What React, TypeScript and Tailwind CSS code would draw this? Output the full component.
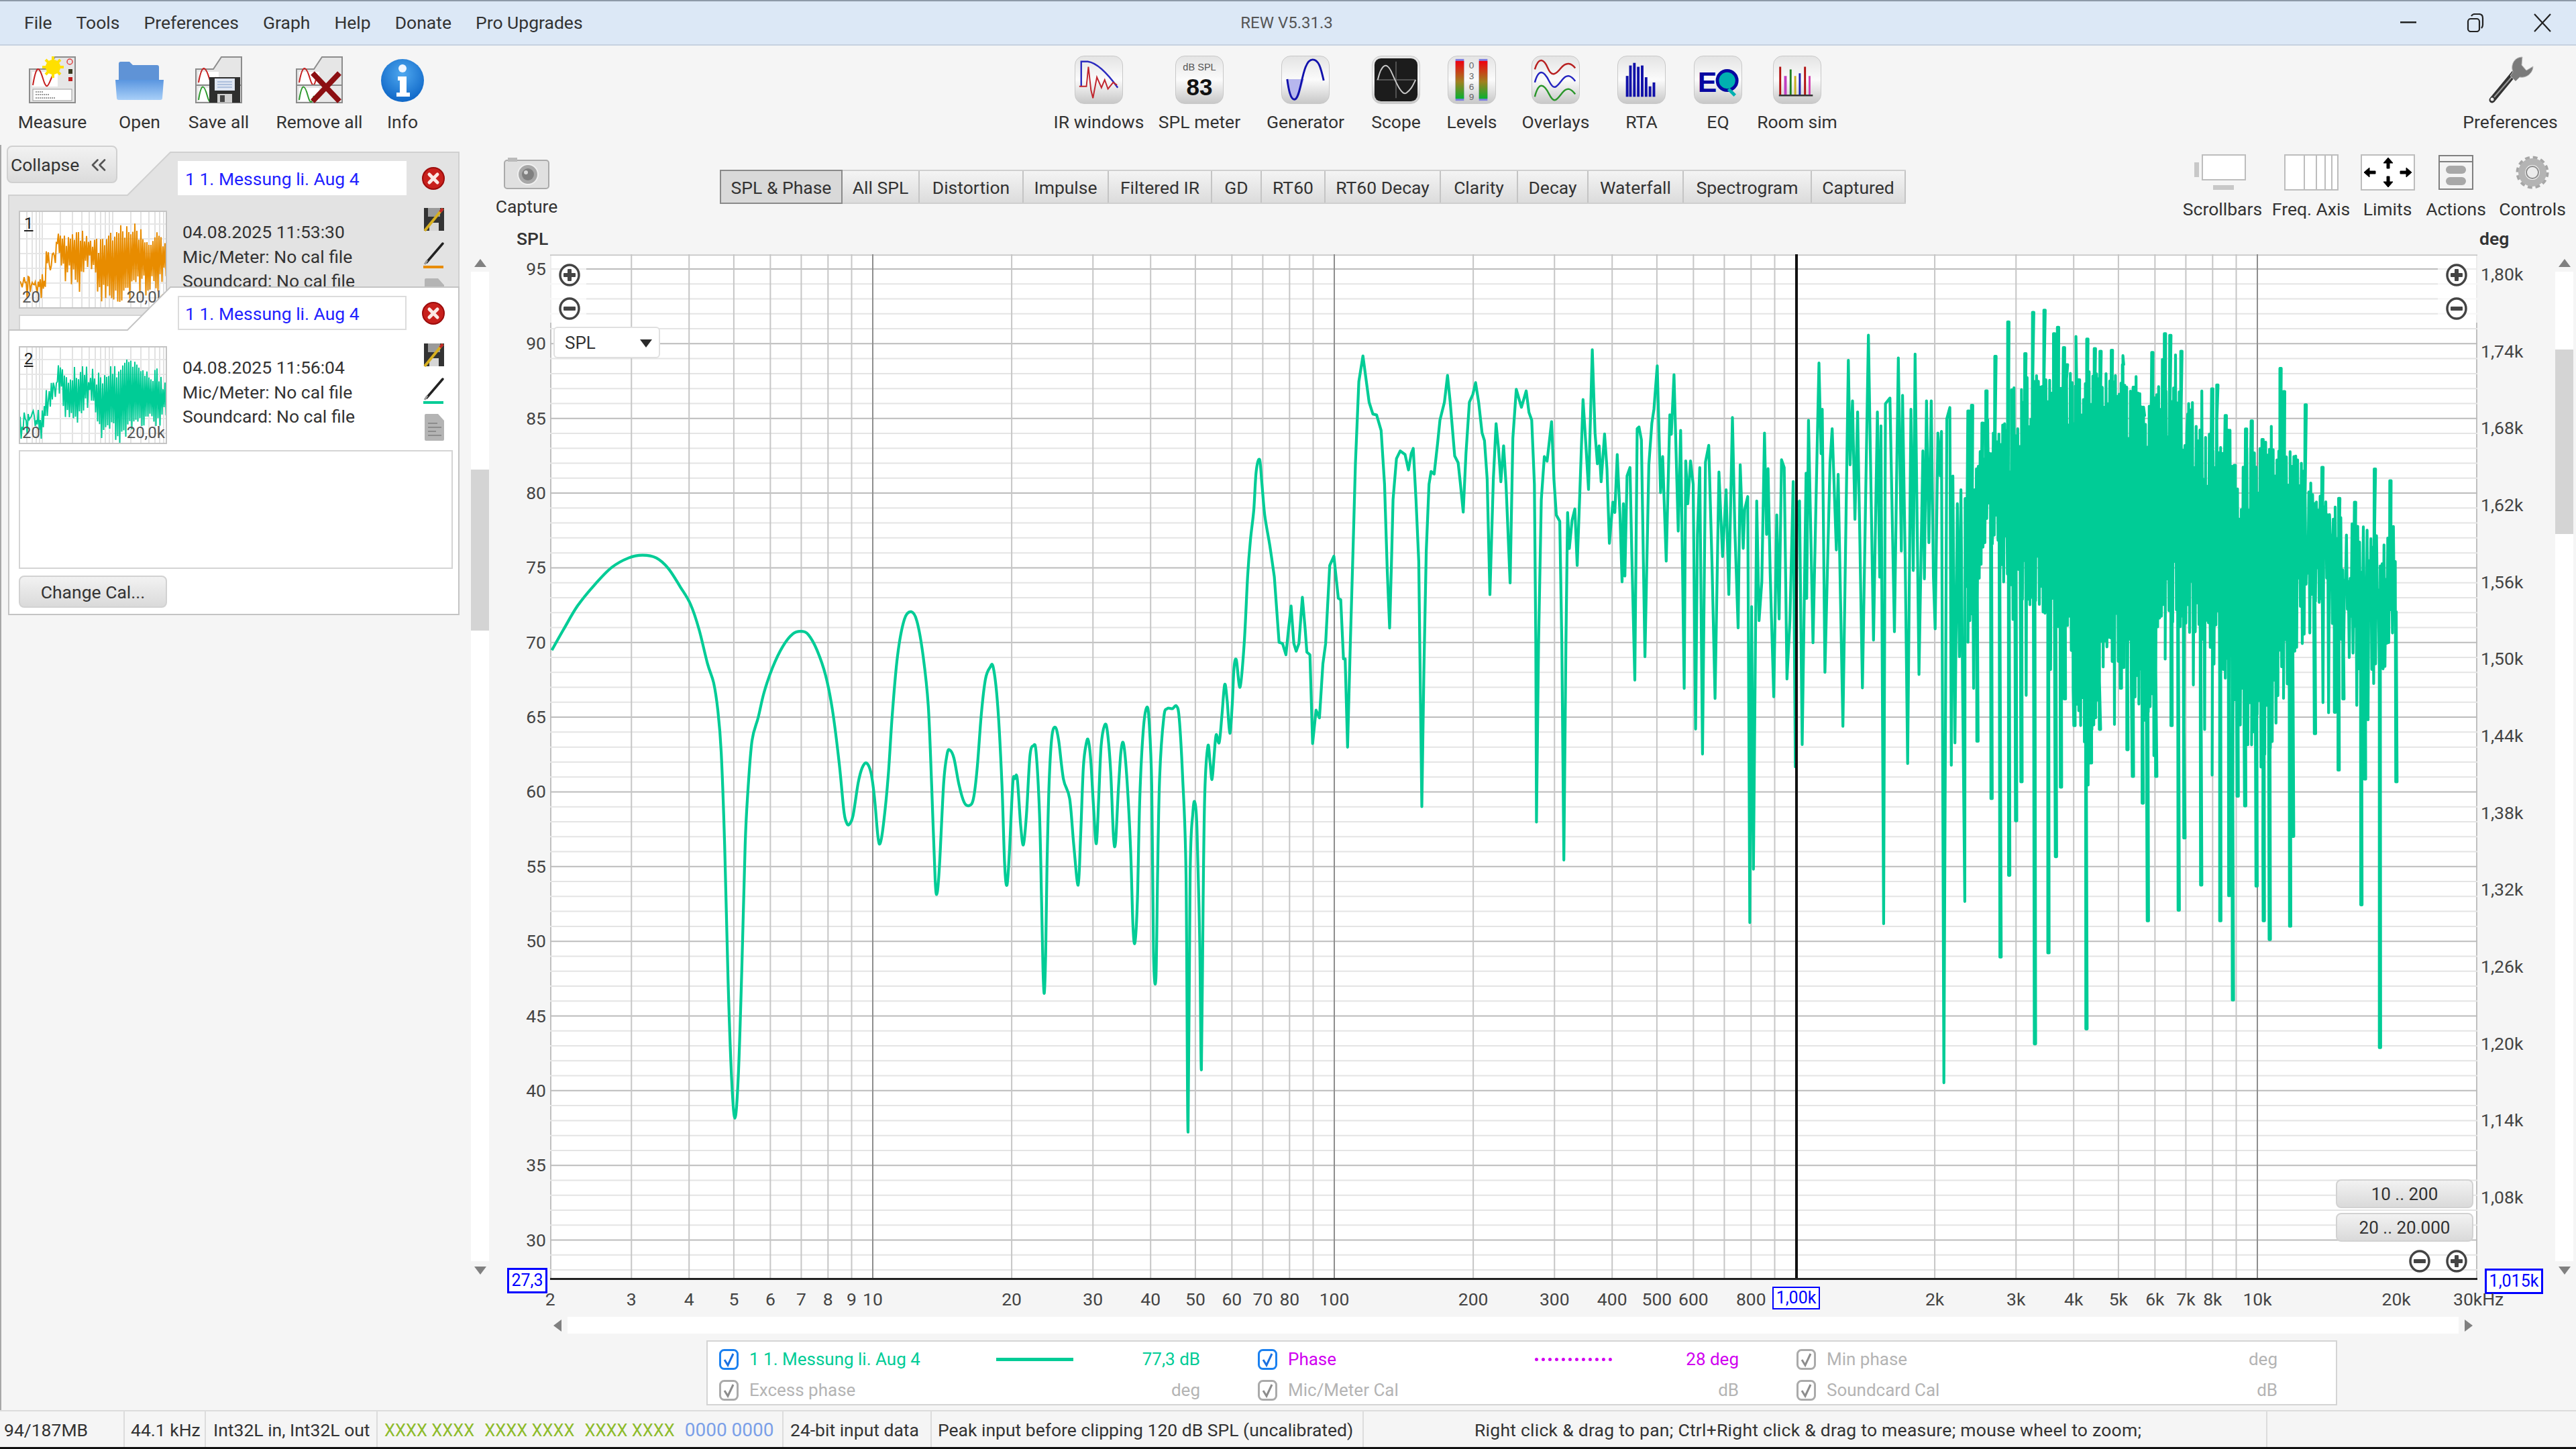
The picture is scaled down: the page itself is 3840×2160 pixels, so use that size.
import { ChevronsLeft } from "lucide-react";
import type { ReactNode } from "react";

const PLOT_W = 2873;
const PLOT_H = 1529;
const gx = (f: number) => 1169 + 688 * Math.log10(f / 100);
const gy = (db: number) => 22 + (95 - db) * 22.27;

const seeded = (seed: number) => () => {
  seed = (seed * 1664525 + 1013904223) >>> 0;
  return seed / 4294967296;
};

const lerp = (table: number[][], x: number) => {
  for (let i = 1; i < table.length; i++) {
    if (x <= table[i][0]) {
      const [x0, y0] = table[i - 1];
      const [x1, y1] = table[i];
      return y0 + ((y1 - y0) * (x - x0)) / (x1 - x0);
    }
  }
  return table[table.length - 1][1];
};

// traced curve, in crop coordinates of each part of the plot
const low = [[5,295],[40,240],[80,180],[130,125],[180,80],[230,55],[270,48],[310,55],[345,82],[380,130],[410,175],[435,240],[460,330],[478,380],[490,450],[500,560],[510,800],[520,1150],[530,1400],[540,1510],[550,1400],[560,1130],[570,800],[578,660],[590,530],[608,470],[625,405],[650,340],[680,285],[710,252],[735,246],[755,255],[780,295],[805,360],[825,450],[845,590],[858,710],[865,740],[873,748],[885,725],[900,640],[912,600],[925,588],[938,615],[948,680],[958,780],[965,795],[975,740],[988,620],[1000,460],[1015,310],[1035,215],[1055,195],[1072,220],[1090,310],[1105,440],[1115,650],[1125,890],[1131,925],[1138,850],[1150,640],[1160,565],[1168,554],[1180,575],[1195,645],[1210,690],[1225,698],[1237,680],[1248,600],[1260,460],[1272,370],[1285,340],[1295,340],[1308,440],[1320,640],[1328,850],[1335,905],[1342,820],[1352,640],[1358,628],[1365,628],[1375,750],[1383,800],[1392,720],[1402,570],[1412,543],[1420,560],[1430,720],[1436,950],[1440,1120],[1444,1185],[1448,1080],[1452,850],[1458,640],[1466,520],[1476,495],[1486,530],[1500,630],[1518,680],[1530,800],[1543,905],[1550,780],[1558,600],[1567,535]];
const mid = [[5,790],[12,830],[20,920],[28,990],[35,900],[42,800],[52,760],[60,770],[70,850],[78,975],[84,988],[92,890],[100,810],[108,797],[118,870],[128,1000],[135,1150],[141,1182],[148,1100],[155,900],[165,770],[175,725],[182,750],[190,880],[195,1200],[202,1252],[207,1050],[213,860],[225,745],[235,727],[250,727],[262,722],[270,745],[280,860],[290,1050],[296,1552],[302,1050],[310,930],[316,910],[322,960],[330,1180],[335,1430],[340,1100],[345,890],[354,800],[360,830],[366,865],[372,820],[378,778],[387,793],[395,740],[403,680],[410,710],[418,775],[425,720],[430,650],[437,632],[448,685],[460,600],[470,470],[478,400],[488,340],[495,265],[505,242],[512,290],[520,350],[535,410],[548,470],[562,598],[572,600],[582,622],[590,570],[597,527],[605,600],[612,615],[620,600],[630,510],[638,570],[643,617],[652,622],[660,795],[670,730],[680,745],[690,640],[698,600],[710,448],[722,430],[730,480],[735,512],[742,515],[750,630],[755,630],[762,802],[770,600],[778,420],[785,250],[795,90],[807,40],[815,80],[825,130],[836,153],[847,155],[860,185],[870,290],[878,460],[885,570],[890,450],[895,320],[905,240],[916,225],[930,232],[940,262],[948,230],[954,220],[962,320],[970,440],[975,700],[979,918],[985,650],[992,420],[1000,290],[1006,265],[1015,270],[1025,210],[1032,165],[1045,130],[1054,78],[1062,130],[1075,235],[1085,248],[1092,290],[1100,344],[1108,230],[1118,130],[1128,115],[1136,92],[1145,130],[1155,190],[1162,205],[1170,280],[1178,505],[1188,280],[1196,172],[1203,220],[1210,285],[1218,215],[1225,290],[1237,482],[1245,200],[1255,105],[1270,140],[1284,108],[1292,150],[1300,165],[1308,290],[1312,600],[1314,948],[1320,600],[1328,320],[1337,236],[1345,245],[1358,168],[1365,280],[1372,350],[1382,362],[1388,600],[1394,1022],[1400,600],[1405,345],[1410,415],[1418,360],[1426,338],[1433,448],[1441,300],[1450,125],[1458,210],[1466,300],[1477,28],[1485,190],[1492,250],[1497,215],[1503,285],[1513,192],[1520,260],[1527,405],[1537,325],[1543,345],[1550,232],[1558,350],[1564,480],[1568,330]];
const high = [[0,375],[5,505],[12,325],[22,310],[28,465],[38,692],[46,240],[52,237],[60,260],[72,650],[85,305],[95,230],[102,205],[113,127],[124,355],[131,290],[143,478],[155,215],[160,250],[169,143],[183,424],[191,243],[203,707],[208,298],[215,375],[224,298],[233,340],[241,780],[247,430],[255,310],[264,825],[274,300],[285,270],[296,485],[306,725],[319,318],[331,470],[343,350],[352,538],[364,220],[372,420],[383,598],[390,305],[400,455],[405,385],[415,362],[422,1128],[428,560],[434,1032],[445,370],[453,585],[462,515],[471,248],[478,430],[483,312],[490,500],[502,722],[512,395],[520,582],[528,296],[537,310],[546,690],[556,585],[567,335],[574,848],[580,375],[588,370],[597,808],[610,320],[612,545],[618,225],[633,625],[653,122],[660,285],[664,205],[673,678],[690,300],[697,240],[711,458],[717,322],[733,775],[751,117],[757,305],[765,190],[773,403],[782,210],[798,706],[818,72],[835,620],[848,210],[856,507],[860,235],[869,1130],[875,195],[890,185],[905,605],[918,113],[928,460],[932,180],[941,480],[949,842],[960,205],[968,495],[974,106],[987,682],[1000,280],[1005,510],[1012,190],[1020,445],[1028,190],[1035,505],[1041,600],[1050,248],[1058,325],[1062,245],[1070,1416],[1080,222],[1090,202],[1095,845],[1100,325],[1107,805],[1115,375],[1122,650],[1127,350],[1133,725],[1140,1090]];
const denseSpikes11 = [[1150,208],[1162,198],[1180,802],[1197,230],[1210,172],[1227,905],[1240,110],[1257,1190],[1283,48],[1286,1043],[1296,170],[1309,945],[1327,875],[1340,105]];
const denseSpikes12 = [[22,32],[28,1400],[60,28],[73,1230],[92,72],[98,1050],[105,60],[115,920],[125,98],[128,755],[135,130],[160,805],[165,170],[175,158],[200,1372],[203,82],[215,875],[228,100],[245,812],[247,105],[285,103],[288,685],[315,735],[322,130],[337,850],[355,900],[358,172],[388,950],[392,225],[405,1170],[420,107],[433,900],[462,72],[480,75],[484,805],[508,1150],[517,105],[527,1015],[540,222],[578,290],[583,1103],[600,608],[620,175],[637,168],[647,1170],[665,225],[677,1123],[689,1318],[695,318],[705,937],[730,955],[733,250],[752,235],[755,650],[768,1105],[788,270],[792,1170],[812,1205],[847,430],[848,137],[860,180],[880,1180],[890,1012],[932,205],[963,820],[988,322],[1030,780],[1042,888],[1044,380],[1058,755],[1097,387],[1118,1140],[1130,905],[1163,325],[1180,1407],[1215,347],[1235,910]];

const from9 = ([x, y]: number[]) => [x / 1.96, 800 - 379 + y / 1.742];
const from10 = ([x, y]: number[]) => [800 + x / 1.96, 500 - 379 + y / 1.3067];
const from11 = ([x, y]: number[]) => [1600 + x / 2.24, 440 - 379 + y / 1.206];
const from12 = ([x, y]: number[]) => [2200 + x / 2.24, 440 - 379 + y / 1.2544];

const buildCurve = () => {
  const smooth = [...low.map(from9), ...mid.filter((p) => p[0] < 560).map(from10)];
  let d = `M${smooth[0][0]} ${smooth[0][1]}`;
  for (let i = 0; i < smooth.length - 1; i++) {
    const p0 = smooth[Math.max(i - 1, 0)];
    const p1 = smooth[i];
    const p2 = smooth[i + 1];
    const p3 = smooth[Math.min(i + 2, smooth.length - 1)];
    const c1 = [p1[0] + (p2[0] - p0[0]) / 6, p1[1] + (p2[1] - p0[1]) / 6];
    const c2 = [p2[0] - (p3[0] - p1[0]) / 6, p2[1] - (p3[1] - p1[1]) / 6];
    d += `C${c1[0].toFixed(1)} ${c1[1].toFixed(1)} ${c2[0].toFixed(1)} ${c2[1].toFixed(1)} ${p2[0].toFixed(1)} ${p2[1].toFixed(1)}`;
  }
  const rest = [...mid.filter((p) => p[0] >= 560).map(from10), ...high.map(from11)];
  rest.forEach((p) => (d += `L${p[0].toFixed(1)} ${p[1].toFixed(1)}`));

  // dense part above 3 kHz: body between two envelopes, with the traced spikes in it
  const upper = [[1140,360],[1200,260],[1300,220]].map(from11).concat([[0,150],[100,150],[200,140],[300,150],[400,210],[500,150],[600,240],[700,330],[800,260],[900,300],[1000,400],[1100,430],[1200,450],[1235,450]].map(from12));
  const lower = [[1140,650],[1200,500],[1300,550],[1400,570],[1500,600]].map(from11).concat([[100,590],[200,850],[300,680],[400,800],[500,620],[600,650],[700,800],[800,900],[900,670],[1000,590],[1100,700],[1200,700],[1235,600]].map(from12));
  const spikes = [...denseSpikes11.map(from11), ...denseSpikes12.map(from12)].sort((a, b) => a[0] - b[0]);
  const rnd = seeded(41);
  let s = 0;
  let top = true;
  for (let x = from11([1141, 0])[0]; x < 2752; x += 1.4) {
    while (s < spikes.length && spikes[s][0] <= x) {
      const [sx, sy] = spikes[s];
      d += `L${sx.toFixed(1)} ${sy.toFixed(1)}L${(sx + 2).toFixed(1)} ${sy.toFixed(1)}`;
      s++;
    }
    const u = lerp(upper, x);
    const l = lerp(lower, x);
    const r = rnd();
    const y = top
      ? u + r * r * 95 - (rnd() < 0.2 ? rnd() * 60 : 0)
      : l - r * r * 120 + (rnd() < 0.12 ? rnd() * 180 : 0);
    d += `L${x.toFixed(1)} ${y.toFixed(1)}`;
    top = !top;
  }
  return d;
};

const curvePath = buildCurve();

const thumbUpper = [[0,97],[35,90],[40,45],[45,75],[55,25],[70,28],[95,24],[118,37],[137,20],[165,14],[185,20],[205,30],[221,47]];
const thumbLower = [[0,137],[20,125],[33,146],[45,85],[57,75],[67,108],[88,120],[103,90],[118,135],[137,135],[150,146],[165,130],[190,125],[221,112]];

const thumbPoints = (seed: number) => {
  const rnd = seeded(seed);
  const pts: string[] = [];
  let top = true;
  for (let x = 0; x <= 221; x += 1.5) {
    const u = lerp(thumbUpper, x);
    const l = lerp(thumbLower, x);
    const y = top ? u + rnd() * 26 : l - rnd() * 32;
    pts.push(`${x},${y.toFixed(1)}`);
    top = !top;
  }
  return pts.join(" ");
};

const Tile = ({ children }: { children: ReactNode }) => (
  <div className="h-[72px] w-[72px] rounded-[14px] border border-[#c8c8c8] bg-linear-to-b from-[#e4e4e4] via-[#fbfbfb] to-[#c8c8c8] overflow-hidden">
    <svg width="70" height="70" viewBox="0 0 72 72">{children}</svg>
  </div>
);

const Panel = ({ y = 0 }: { y?: number }) => (
  <path d={`M2 ${y + 20}H28L40 ${y + 2}H70V${y + 70}H2Z`} fill="#e6e6e6" stroke="#8c8c8c" strokeWidth="2" />
);

const MeasureIcon = () => (
  <svg width="72" height="72" viewBox="0 0 72 72">
    <Panel />
    <rect x="6" y="24" width="38" height="22" fill="#fff" />
    <path d="M7 44C12 14 16 14 22 34S30 44 36 30" fill="none" stroke="#c62020" strokeWidth="2" />
    <circle cx="62" cy="9" r="4" fill="none" stroke="#e04040" strokeWidth="1.5" />
    <rect x="60" y="20" width="6" height="7" fill="#3a3a20" />
    <rect x="60" y="32" width="6" height="6" fill="#c02020" />
    <rect x="7" y="50" width="58" height="17" fill="#fff" stroke="#999" />
    <path d="M11 54h12M11 58h20M11 63h30" stroke="#777" strokeWidth="1.5" strokeDasharray="2 1" />
    <g stroke="#ffe000" strokeWidth="4">
      <path d="M37 1v32M21 17h32M26 6l22 22M48 6L26 28" />
    </g>
    <circle cx="37" cy="17" r="11" fill="#ffe000" />
  </svg>
);

const OpenIcon = () => (
  <svg width="72" height="72" viewBox="0 0 72 72">
    <defs>
      <linearGradient id="folderFront" x1="0" y1="0" x2="0" y2="1">
        <stop offset="0" stopColor="#5a96e0" />
        <stop offset="1" stopColor="#a8cff8" />
      </linearGradient>
    </defs>
    <path d="M5 12a3 3 0 0 1 3-3h13l5 5h36a3 3 0 0 1 3 3v20H5Z" fill="#5f93d6" />
    <path d="M0 36h72l-2 27a3 3 0 0 1-3 3H5a3 3 0 0 1-3-3Z" fill="url(#folderFront)" />
  </svg>
);

const FloppyWave = () => (
  <>
    <Panel />
    <rect x="6" y="24" width="30" height="18" fill="#fff" />
    <path d="M6 40C11 12 16 14 22 34S30 38 32 32" fill="none" stroke="#c62020" strokeWidth="2" />
    <rect x="2" y="44" width="68" height="26" fill="#e8e8e8" stroke="#8c8c8c" strokeWidth="2" />
    <rect x="6" y="48" width="30" height="20" fill="#fff" />
    <path d="M6 66C10 40 14 42 19 60S26 64 28 60" fill="none" stroke="#2f9a2f" strokeWidth="2" />
  </>
);

const SaveAllIcon = () => (
  <svg width="72" height="72" viewBox="0 0 72 72">
    <FloppyWave />
    <path d="M22 32h46v38H22Z" fill="#2e2e2e" />
    <rect x="30" y="34" width="30" height="18" fill="#dfe6f2" />
    <path d="M34 39h22M34 43h22M34 47h22" stroke="#9fb4d6" strokeWidth="1.5" />
    <rect x="34" y="57" width="22" height="13" fill="#d0d0d0" />
    <rect x="38" y="59" width="7" height="10" fill="#444" />
  </svg>
);

const RemoveAllIcon = () => (
  <svg width="72" height="72" viewBox="0 0 72 72">
    <FloppyWave />
    <path d="M26 26l40 42M66 26L26 68" stroke="#8c0f12" strokeWidth="8" />
  </svg>
);

const InfoIcon = () => (
  <svg width="72" height="72" viewBox="0 0 72 72">
    <defs>
      <radialGradient id="infoBall" cx="0.5" cy="0.35" r="0.7">
        <stop offset="0" stopColor="#4fa8ef" />
        <stop offset="1" stopColor="#0a62c4" />
      </radialGradient>
    </defs>
    <ellipse cx="36" cy="37" rx="32" ry="32" fill="url(#infoBall)" />
    <circle cx="36" cy="19" r="6" fill="#f0f6ff" />
    <path d="M29 31h13v24h5v6H27v-6h5V37h-3Z" fill="#fff" />
  </svg>
);

const IrIcon = () => (
  <Tile>
    <path d="M9 46V8h10c15 2 33 22 46 40" fill="none" stroke="#2b2bbf" strokeWidth="2.5" />
    <path d="M6 46h11l3-30 4 36 3 12 6-32 7 16 5-12 5 14 8-10 6 4" fill="none" stroke="#c0242c" strokeWidth="2" />
  </Tile>
);

const SplIcon = () => (
  <Tile>
    <text x="36" y="22" textAnchor="middle" fontSize="15" fontFamily="Liberation Sans" fill="#555">dB SPL</text>
    <text x="36" y="60" textAnchor="middle" fontSize="36" fontWeight="700" fontFamily="Liberation Sans" fill="#111">83</text>
  </Tile>
);

const GeneratorIcon = () => (
  <Tile>
    <path d="M8 35H34C28 52 26 66 19 66 13 66 10 50 8 35Z" fill="#b7b7ee" />
    <path d="M8 35C10 50 13 66 19 66 30 66 30 5 47 5 57 5 60 20 64 37" fill="none" stroke="#1212ac" strokeWidth="3" />
  </Tile>
);

const ScopeIcon = () => (
  <Tile>
    <rect x="3" y="3" width="66" height="66" rx="10" fill="#1c1c1c" />
    <path d="M36 8v56M6 36h60" stroke="#666" strokeWidth="1.5" />
    <path d="M8 36C14 10 22 10 28 22S44 62 52 56 62 44 66 36" fill="none" stroke="#c8c8c8" strokeWidth="2" />
  </Tile>
);

const LevelsIcon = () => (
  <Tile>
    <defs>
      <linearGradient id="levelBar" x1="0" y1="0" x2="0" y2="1">
        <stop offset="0" stopColor="#f00010" />
        <stop offset="0.55" stopColor="#a08020" />
        <stop offset="1" stopColor="#08b030" />
      </linearGradient>
    </defs>
    <rect x="11" y="4" width="13" height="64" fill="#7f7fe0" />
    <rect x="11" y="7" width="13" height="58" fill="url(#levelBar)" />
    <rect x="47" y="4" width="13" height="64" fill="#7f7fe0" />
    <rect x="47" y="7" width="13" height="58" fill="url(#levelBar)" />
    {["0", "3", "6", "9"].map((n, i) => (
      <text key={n} x="35.5" y={19 + i * 16} textAnchor="middle" fontSize="14" fontFamily="Liberation Sans" fill="#666">{n}</text>
    ))}
  </Tile>
);

const OverlaysIcon = () => (
  <Tile>
    <path d="M4 20C10 0 18 4 24 18S36 28 44 18 60 10 66 18" fill="none" stroke="#b82020" strokeWidth="2.5" />
    <path d="M4 40C10 18 18 22 26 38S38 46 46 36 60 30 66 38" fill="none" stroke="#2424c0" strokeWidth="2.5" />
    <path d="M4 62C10 38 18 42 26 58S38 66 46 56 60 50 66 58" fill="none" stroke="#2a962a" strokeWidth="2.5" />
  </Tile>
);

const RtaIcon = () => (
  <Tile>
    {[[12, 30], [17, 14], [23, 10], [29, 16], [35, 14], [41, 32], [47, 46], [53, 40]].map(([x, y]) => (
      <rect key={x} x={x} y={y} width="4" height={62 - y} fill="#1010a8" />
    ))}
  </Tile>
);

const EqIcon = () => (
  <Tile>
    <text x="5" y="54" fontSize="44" fontWeight="700" fontFamily="Liberation Sans" fill="#0808a0">E</text>
    <circle cx="50" cy="37" r="15" fill="#00b0b0" stroke="#0808a0" strokeWidth="5" />
    <path d="M52 50l10 10" stroke="#00b0b0" strokeWidth="5" />
  </Tile>
);

const RoomSimIcon = () => (
  <Tile>
    <path d="M10 16v44" stroke="#b01010" strokeWidth="3" />
    <path d="M18 30v30" stroke="#c040c0" strokeWidth="4" />
    <path d="M26 20v40" stroke="#208020" strokeWidth="3" />
    <path d="M33 30v30" stroke="#c8b020" strokeWidth="3" />
    <path d="M40 26v34" stroke="#2020b0" strokeWidth="3" />
    <path d="M48 16v44" stroke="#b01010" strokeWidth="3" />
    <path d="M55 30v30" stroke="#d040b0" strokeWidth="3" />
    <path d="M8 60h52" stroke="#333" strokeWidth="2.5" />
  </Tile>
);

const WrenchIcon = () => (
  <svg width="72" height="72" viewBox="0 0 72 72">
    <path d="M9 66L42 26" stroke="#333" strokeWidth="9" strokeLinecap="round" />
    <path d="M12 62L38 32" stroke="#999" strokeWidth="2" />
    <circle cx="9" cy="65" r="2.5" fill="#eee" />
    <path d="M54 2C42 2 36 14 40 24L36 30 44 38 50 32C60 34 70 26 70 16L60 22 53 14Z" fill="#7a7a7a" stroke="#bbb" strokeWidth="1" />
  </svg>
);

const CaptureIcon = () => (
  <svg width="68" height="48" viewBox="0 0 68 48">
    <rect x="1" y="5" width="66" height="42" rx="4" fill="#e0e0e0" stroke="#aaaaaa" strokeWidth="2" />
    <rect x="6" y="1" width="14" height="6" fill="#bbbbbb" />
    <circle cx="36" cy="26" r="15" fill="#a8a8a8" stroke="#f0f0f0" strokeWidth="2" />
    <circle cx="36" cy="26" r="9" fill="#808080" />
    <circle cx="33" cy="23" r="3" fill="#d8d8d8" />
  </svg>
);

const ScrollbarsIcon = () => (
  <svg width="85" height="54" viewBox="0 0 85 54">
    <rect x="12" y="1" width="64" height="37" fill="#fff" stroke="#bdbdbd" strokeWidth="2" />
    <rect x="0" y="12" width="7" height="22" fill="#c8c8c8" />
    <rect x="28" y="46" width="31" height="7" fill="#c8c8c8" />
  </svg>
);

const FreqAxisIcon = () => (
  <svg width="81" height="54" viewBox="0 0 81 54">
    <rect x="1" y="1" width="79" height="52" fill="#fff" stroke="#bdbdbd" strokeWidth="2" />
    <path d="M30 1v52M48 1v52M61 1v52M71 1v52" stroke="#bdbdbd" strokeWidth="2" />
  </svg>
);

const LimitsIcon = () => (
  <svg width="81" height="54" viewBox="0 0 81 54">
    <rect x="1" y="1" width="79" height="52" fill="#fff" stroke="#bdbdbd" strokeWidth="2" />
    <path d="M41 5l-7 8h5v8h4v-8h5ZM41 49l-7-8h5v-8h4v8h5ZM5 27l8-7v5h9v4h-9v5ZM76 27l-8-7v5h-9v4h9v5Z" fill="#000" stroke="#000" strokeWidth="1" />
  </svg>
);

const ActionsIcon = () => (
  <svg width="52" height="54" viewBox="0 0 52 54">
    <rect x="1" y="2" width="50" height="50" fill="#f4f4f4" stroke="#808080" strokeWidth="2" />
    <path d="M1 11h50" stroke="#808080" strokeWidth="2" />
    <rect x="11" y="17" width="30" height="12" rx="6" fill="#a8a8a8" />
    <rect x="11" y="34" width="30" height="12" rx="6" fill="#a8a8a8" />
  </svg>
);

const GearIcon = () => (
  <svg width="52" height="54" viewBox="0 0 52 54">
    <circle cx="26" cy="27" r="21" fill="none" stroke="#a6a6a6" strokeWidth="7" strokeDasharray="6.4 4.6" />
    <circle cx="26" cy="27" r="16" fill="none" stroke="#b4b4b4" strokeWidth="10" />
    <circle cx="26" cy="27" r="9" fill="#ececec" stroke="#8c8c8c" strokeWidth="2" />
  </svg>
);

const CloseBall = () => (
  <svg width="34" height="34" viewBox="0 0 34 34">
    <circle cx="17" cy="17" r="16" fill="#c8201c" stroke="#9c0c0c" strokeWidth="2" />
    <path d="M11 11l12 12M23 11L11 23" stroke="#fbe9e5" strokeWidth="5" strokeLinecap="round" />
  </svg>
);

const SaveEdit = () => (
  <svg width="34" height="40" viewBox="0 0 34 40">
    <path d="M2 3h30v34H2Z" fill="#333" />
    <rect x="8" y="3" width="18" height="13" fill="#9a9a9a" />
    <rect x="10" y="25" width="14" height="12" fill="#d6d6d6" />
    <path d="M3 37L30 4" stroke="#d8b020" strokeWidth="4" />
    <path d="M26 9l4-5" stroke="#c02828" strokeWidth="4" />
  </svg>
);

const PenLine = ({ color }: { color: string }) => (
  <svg width="34" height="40" viewBox="0 0 34 40">
    <path d="M6 30L30 2" stroke="#222" strokeWidth="3.5" strokeLinecap="round" />
    <path d="M3 33l4-6" stroke="#999" strokeWidth="3" />
    <rect x="1" y="35" width="30" height="4" fill={color} />
  </svg>
);

const DocIcon = () => (
  <svg width="34" height="40" viewBox="0 0 34 40">
    <path d="M3 2a2 2 0 0 1 2-2h18l9 10v28a2 2 0 0 1-2 2H5a2 2 0 0 1-2-2Z" fill="#b4b4b4" />
    <path d="M8 14h14M8 20h20M8 26h12M8 32h20" stroke="#8c8c8c" strokeWidth="2" />
  </svg>
);

const Thumb = ({ n, color, seed }: { n: number; color: string; seed: number }) => (
  <div className="relative h-[146px] w-[221px] shrink-0 border-2 border-[#c4c4c4] bg-white overflow-hidden">
    <svg width="221" height="146" className="absolute left-0 top-0">
      {[10, 18, 24, 29, 33, 60, 78, 92, 103, 112, 120, 127, 133, 138, 165, 180, 192, 201, 208, 214].map((x) => (
        <path key={x} d={`M${x} 0V146`} stroke="#e2e2e2" strokeWidth="2" />
      ))}
      {[18, 40, 62, 84, 106, 128].map((y) => (
        <path key={y} d={`M0 ${y}H221`} stroke="#e6e6e6" strokeWidth="2" />
      ))}
      <polyline points={thumbPoints(seed)} fill="none" stroke={color} strokeWidth="2" />
    </svg>
    <span className="absolute left-[6px] top-[2px] text-[24px] leading-[30px] text-[#222] underline">{n}</span>
    <span className="absolute left-[3px] bottom-[1px] text-[24px] leading-[28px] text-[#555]">20</span>
    <span className="absolute right-[1px] bottom-[1px] text-[24px] leading-[28px] text-[#555]">20,0k</span>
  </div>
);

const MeasurementCard = ({ n, color, seed, time, selected }: { n: number; color: string; seed: number; time: string; selected?: boolean }) => {
  const height = selected ? 490 : 266;
  return (
    <div className={selected ? "relative -mt-[65px] h-[490px] w-[673px]" : "relative h-[266px] w-[673px] overflow-hidden"}>
      <svg className="absolute left-0 top-0 h-full w-full">
        <polygon
          points={`1,${height + 20} 1,65 178,65 242,1 672,1 672,${selected ? height - 1 : height + 20}${selected ? ` 1,${height - 1}` : ""}`}
          fill={selected ? "#ffffff" : "#e3e3e3"}
          stroke={selected ? "#c4c4c4" : "#d0d0d0"}
          strokeWidth="2"
        />
      </svg>
      <div className="relative flex items-center pl-[253px] pt-[14px]">
        <div className={selected ? "flex h-[51px] w-[341px] items-center border-2 border-[#dcdcdc] bg-white pl-[9px] pt-[3px] text-[26.5px] text-[#1f1fff]" : "flex h-[51px] w-[341px] items-center bg-white pl-[11px] pt-[3px] text-[26.5px] text-[#1f1fff]"}>
          1 1. Messung li. Aug 4
        </div>
        <div className="ml-[23px]"><CloseBall /></div>
      </div>
      <div className={selected ? "relative flex pl-[16px] pt-[24px]" : "relative flex pl-[16px] pt-[23px]"}>
        <Thumb n={n} color={color} seed={seed} />
        <div className="ml-[23px] w-[345px] pt-[14px] text-[26.5px] leading-[36.5px] text-[#333]">
          <div>{time}</div>
          <div>Mic/Meter: No cal file</div>
          <div>Soundcard: No cal file</div>
        </div>
        <div className="ml-[13px] -mt-[7px] flex w-[34px] flex-col gap-[14px]">
          <SaveEdit />
          <PenLine color={color} />
          <DocIcon />
        </div>
      </div>
      <div className="relative ml-[16px] mt-[9px] h-[177px] w-[647px] border-2 border-[#d4d4d4] bg-white" />
      {selected && (
        <button className="relative ml-[16px] mt-[10px] h-[48px] w-[221px] rounded-[8px] border-2 border-[#d2d2d2] bg-linear-to-b from-[#f2f2f2] to-[#dadada] pt-[2px] text-[26.5px] text-[#333]">
          Change Cal...
        </button>
      )}
    </div>
  );
};

const Triangle = ({ down }: { down?: boolean }) => (
  <svg width="18" height="12" viewBox="0 0 18 12">
    <path d={down ? "M0 0h18L9 12Z" : "M9 0l9 12H0Z"} fill="#808080" />
  </svg>
);

const VScroll = ({ thumb }: { thumb: ReactNode }) => (
  <div className="flex h-[1529px] w-[27px] flex-col">
    <div className="flex h-[26px] items-center justify-center"><Triangle /></div>
    <div className="h-[1475px] bg-white">{thumb}</div>
    <div className="flex h-[28px] items-center justify-center"><Triangle down /></div>
  </div>
);

const ZoomBtn = ({ plus }: { plus?: boolean }) => (
  <svg width="32" height="34" viewBox="0 0 32 34">
    <ellipse cx="16" cy="17" rx="14" ry="15" fill="#fff" stroke="#444" strokeWidth="3.5" />
    <rect x="7" y="14" width="18" height="6" rx="1" fill="#444" />
    {plus && <rect x="13" y="8" width="6" height="18" rx="1" fill="#444" />}
  </svg>
);

const Checkbox = ({ on }: { on?: boolean }) => (
  <svg width="29" height="31" viewBox="0 0 29 31" className="shrink-0">
    <rect x="1.5" y="1.5" width="26" height="28" rx="6" fill="#fff" stroke={on ? "#1a80f0" : "#aaaaaa"} strokeWidth="3" />
    <path d="M8 16l5 8 8-17" fill="none" stroke={on ? "#1a70e0" : "#8c8c8c"} strokeWidth="3" />
  </svg>
);

const LegendCell = ({ on, label, value, textClass, line }: { on?: boolean; label: string; value: string; textClass: string; line?: ReactNode }) => (
  <div className="flex h-[46px] w-[803px] items-center pr-[86px] text-[26px]">
    <Checkbox on={on} />
    <span className={`ml-[16px] w-[368px] ${textClass}`}>{label}</span>
    <div className="w-[115px]">{line}</div>
    <span className={`ml-auto ${textClass}`}>{value}</span>
  </div>
);

const tabs = [
  { label: "SPL & Phase", w: "w-[183px]", on: true },
  { label: "All SPL", w: "w-[115px]" },
  { label: "Distortion", w: "w-[155px]" },
  { label: "Impulse", w: "w-[127px]" },
  { label: "Filtered IR", w: "w-[154px]" },
  { label: "GD", w: "w-[74px]" },
  { label: "RT60", w: "w-[95px]" },
  { label: "RT60 Decay", w: "w-[172px]" },
  { label: "Clarity", w: "w-[115px]" },
  { label: "Decay", w: "w-[105px]" },
  { label: "Waterfall", w: "w-[142px]" },
  { label: "Spectrogram", w: "w-[191px]" },
  { label: "Captured", w: "w-[140px]" },
];

const xTicks = [2, 3, 4, 5, 6, 7, 8, 9, 10, 20, 30, 40, 50, 60, 70, 80, 100, 200, 300, 400, 500, 600, 800, 2000, 3000, 4000, 5000, 6000, 7000, 8000, 10000, 20000];
const gridF = [1, 10, 100, 1000].flatMap((d) => [2, 3, 4, 5, 6, 7, 8, 9, 10].map((m) => m * d)).filter((f) => f >= 3 && f <= 20000);
const dbLines = Array.from({ length: 69 }, (_, i) => 96 - i);
const degTicks = ["1,80k", "1,74k", "1,68k", "1,62k", "1,56k", "1,50k", "1,44k", "1,38k", "1,32k", "1,26k", "1,20k", "1,14k", "1,08k"];
const splTicks = [95, 90, 85, 80, 75, 70, 65, 60, 55, 50, 45, 40, 35, 30];

const ToolItem = ({ label, w, children }: { label: string; w: string; children: ReactNode }) => (
  <div className={`flex shrink-0 flex-col items-center ${w}`}>
    <div className="flex h-[72px] items-center">{children}</div>
    <span className="mt-[9px] whitespace-nowrap text-[26.5px] leading-[36px] text-[#333]">{label}</span>
  </div>
);

const GraphTool = ({ label, w, children }: { label: string; w: string; children: ReactNode }) => (
  <div className={`flex shrink-0 flex-col items-center ${w}`}>
    <div className="flex h-[54px] items-center">{children}</div>
    <span className="mt-[10px] whitespace-nowrap text-[26.5px] leading-[36px] text-[#333]">{label}</span>
  </div>
);

const Plot = () => (
  <div className="relative h-[1529px] w-[2873px] shrink-0 bg-white">
    <svg width={PLOT_W} height={PLOT_H} className="absolute left-0 top-0">
      <rect x="1" y="1" width={PLOT_W - 2} height={PLOT_H} fill="none" stroke="#c0c0c0" strokeWidth="2" />
      {dbLines.map((db) => (
        <path key={db} d={`M0 ${gy(db)}H${PLOT_W}`} stroke={db % 5 === 0 ? "#bcbcbc" : "#e4e4e4"} strokeWidth="2" />
      ))}
      {gridF.map((f) => (
        <path key={f} d={`M${gx(f)} 0V${PLOT_H}`} stroke={f === 10 || f === 100 || f === 10000 ? "#8e8e8e" : "#c6c6c6"} strokeWidth="2" />
      ))}
      <path d={curvePath} fill="none" stroke="#00cc96" strokeWidth="4.2" strokeLinejoin="round" />
      <path d={`M${1858} 0V${PLOT_H}`} stroke="#111" strokeWidth="4" />
      <path d={`M0 ${PLOT_H - 1.5}H${PLOT_W}`} stroke="#222" strokeWidth="3" />
    </svg>
    <div className="absolute left-0 top-[2px] flex h-[100px] w-[54px] flex-col items-center gap-[16px] bg-white/70 pl-[6px] pr-[2px] pt-[12px]">
      <ZoomBtn plus />
      <ZoomBtn />
    </div>
    <div className="absolute left-[5px] top-[108px] flex h-[47px] w-[159px] items-center justify-between rounded-[6px] border-2 border-[#e0e0e0] bg-white pl-[15px] pr-[10px] pt-[2px] text-[26px] text-[#333]">
      SPL
      <svg width="18" height="12" viewBox="0 0 18 12"><path d="M0 0h18L9 12Z" fill="#2a2a2a" /></svg>
    </div>
    <div className="absolute right-0 top-[2px] flex h-[100px] w-[59px] flex-col items-center gap-[16px] bg-white/70 pr-[3px] pt-[12px]">
      <ZoomBtn plus />
      <ZoomBtn />
    </div>
    <div className="absolute left-[2662px] top-[1379px] flex w-[205px] flex-col gap-[7px] text-[26px] text-[#333]">
      <div className="flex h-[43px] items-center justify-center rounded-[8px] border-2 border-[#d2d2d2] bg-linear-to-b from-[#f2f2f2] to-[#dadada] pt-[2px]">10 .. 200</div>
      <div className="flex h-[43px] items-center justify-center rounded-[8px] border-2 border-[#d2d2d2] bg-linear-to-b from-[#f2f2f2] to-[#dadada] pt-[2px]">20 .. 20.000</div>
    </div>
    <div className="absolute left-[2771px] top-[1484px] flex gap-[23px]">
      <ZoomBtn />
      <ZoomBtn plus />
    </div>
    <div className="absolute -left-[64px] top-[1511px] flex h-[38px] w-[60px] items-center justify-center border-[3px] border-[#0000ff] bg-white text-[25px] text-[#0000ff]">27,3</div>
    <div className="absolute left-[2884px] top-[1512px] flex h-[38px] w-[87px] items-center justify-center border-[3px] border-[#0000ff] bg-white text-[25px] text-[#0000ff]">1,015k</div>
  </div>
);

const App = () => (
  <div className="flex h-[2160px] w-[3840px] flex-col overflow-hidden bg-[#f5f5f5] font-[Roboto,sans-serif] text-[26.5px] text-[#333]">
    <div className="grid h-[68px] shrink-0 grid-cols-[1fr_auto_1fr] items-center border-t-2 border-b-2 border-t-[#8e9aa8] border-b-[#c6d2e0] bg-[#dce8f6]">
      <div className="flex gap-[36px] pl-[36px]">
        {["File", "Tools", "Preferences", "Graph", "Help", "Donate", "Pro Upgrades"].map((m) => (
          <span key={m}>{m}</span>
        ))}
      </div>
      <span className="-ml-[4px] text-[24px] text-[#555]">REW V5.31.3</span>
      <div className="flex justify-end">
        <div className="flex h-[50px] w-[100px] items-center justify-center">
          <svg width="24" height="4"><rect width="24" height="2.5" fill="#222" /></svg>
        </div>
        <div className="flex h-[50px] w-[100px] items-center justify-center">
          <svg width="26" height="28" viewBox="0 0 26 28" fill="none" stroke="#222" strokeWidth="2.2"><rect x="2" y="8" width="17" height="19" rx="4" /><path d="M7 4c1-2 2-3 5-3h6c4 0 6 2 6 6v10c0 2-1 4-2 5" /></svg>
        </div>
        <div className="flex h-[50px] w-[100px] items-center justify-center">
          <svg width="26" height="28" viewBox="0 0 26 28" stroke="#222" strokeWidth="2.2"><path d="M1 1l24 26M25 1L1 27" /></svg>
        </div>
      </div>
    </div>

    <div className="flex h-[148px] shrink-0 pl-[13px] pt-[15px]">
      <ToolItem label="Measure" w="w-[130px]"><MeasureIcon /></ToolItem>
      <ToolItem label="Open" w="w-[130px]"><OpenIcon /></ToolItem>
      <ToolItem label="Save all" w="w-[106px]"><SaveAllIcon /></ToolItem>
      <ToolItem label="Remove all" w="w-[194px]"><RemoveAllIcon /></ToolItem>
      <ToolItem label="Info" w="w-[54px]"><InfoIcon /></ToolItem>
      <div className="w-[939px] shrink-0" />
      <ToolItem label="IR windows" w="w-[144px]"><IrIcon /></ToolItem>
      <ToolItem label="SPL meter" w="w-[156px]"><SplIcon /></ToolItem>
      <ToolItem label="Generator" w="w-[160px]"><GeneratorIcon /></ToolItem>
      <ToolItem label="Scope" w="w-[110px]"><ScopeIcon /></ToolItem>
      <ToolItem label="Levels" w="w-[116px]"><LevelsIcon /></ToolItem>
      <ToolItem label="Overlays" w="w-[134px]"><OverlaysIcon /></ToolItem>
      <ToolItem label="RTA" w="w-[122px]"><RtaIcon /></ToolItem>
      <ToolItem label="EQ" w="w-[106px]"><EqIcon /></ToolItem>
      <ToolItem label="Room sim" w="w-[130px]"><RoomSimIcon /></ToolItem>
      <div className="ml-auto mr-[23px]">
        <ToolItem label="Preferences" w="w-[150px]"><WrenchIcon /></ToolItem>
      </div>
    </div>

    <div className="flex min-h-0 flex-1">
      <aside className="relative w-[702px] shrink-0 border-l-2 border-[#a8a8a8] pl-[10px] pt-[10px]">
        <MeasurementCard n={1} color="#e88c00" seed={7} time="04.08.2025 11:53:30" />
        <MeasurementCard n={2} color="#00cc96" seed={19} time="04.08.2025 11:56:04" selected />
        <button className="absolute left-[8px] top-[1px] flex h-[56px] w-[165px] items-center justify-between rounded-[8px] border-2 border-[#d0d0d0] bg-linear-to-b from-[#f2f2f2] to-[#dcdcdc] pl-[4px] pr-[8px] pt-[2px] text-[26.5px] text-[#333]">
          Collapse
          <ChevronsLeft size={36} strokeWidth={1.8} color="#555" />
        </button>
      </aside>

      <div className="w-[27px] shrink-0 pt-[163px]">
        <VScroll thumb={<div className="mt-[295px] h-[240px] bg-[#d4d4d4]" />} />
      </div>

      <div className="flex min-w-0 flex-1 flex-col">
        <div className="flex h-[124px] shrink-0">
          <div className="flex w-[112px] shrink-0 flex-col items-center pt-[18px]">
            <CaptureIcon />
            <span className="mt-[8px] leading-[36px]">Capture</span>
          </div>
          <div className="ml-[232px] mt-[37px] flex h-[51px] shrink-0 border-y-2 border-[#cfcfcf]">
            {tabs.map((t) => (
              <div
                key={t.label}
                className={
                  t.on
                    ? `flex ${t.w} items-center justify-center border-2 border-[#8a8a8a] bg-[#d9d9d9] -my-[2px] pt-[3px]`
                    : `flex ${t.w} items-center justify-center border-r-2 border-[#c4c4c4] bg-linear-to-b from-[#f4f4f4] to-[#dcdcdc] pt-[3px]`
                }
              >
                {t.label}
              </div>
            ))}
          </div>
          <div className="ml-auto mr-[11px] flex pt-[14px]">
            <GraphTool label="Scrollbars" w="w-[120px]"><ScrollbarsIcon /></GraphTool>
            <GraphTool label="Freq. Axis" w="w-[144px]"><FreqAxisIcon /></GraphTool>
            <GraphTool label="Limits" w="w-[84px]"><LimitsIcon /></GraphTool>
            <GraphTool label="Actions" w="w-[120px]"><ActionsIcon /></GraphTool>
            <GraphTool label="Controls" w="w-[108px]"><GearIcon /></GraphTool>
          </div>
        </div>
        <div className="flex h-[39px] shrink-0 items-center pb-[8px] pl-[41px]">
          <span className="w-[39px] font-medium">SPL</span>
          <span className="ml-[2887px] font-semibold">deg</span>
        </div>

        <div className="flex h-[1529px] shrink-0">
          <div className="relative w-[91px] shrink-0">
            {splTicks.map((t) => (
              <span key={t} className="absolute right-[6px] -translate-y-1/2 text-[#444]" style={{ top: gy(t) }}>{t}</span>
            ))}
          </div>
          <Plot />
          <div className="relative w-[116px] shrink-0">
            {degTicks.map((t, i) => (
              <span key={t} className="absolute left-[5px] -translate-y-1/2 text-[#444]" style={{ top: 30 + i * 114.67 }}>{t}</span>
            ))}
          </div>
          <VScroll thumb={<div className="mt-[116px] h-[275px] bg-[#d4d4d4]" />} />
        </div>

        <div className="relative ml-[91px] h-[52px] w-[2873px] shrink-0 text-[#444]">
          {xTicks.map((f) => (
            <span key={f} className="absolute top-[11px] -translate-x-1/2 leading-[36px]" style={{ left: gx(f) }}>
              {f >= 1000 ? `${f / 1000}k` : f}
            </span>
          ))}
          <span className="absolute left-[2837px] top-[11px] leading-[36px]">30kHz</span>
          <div className="absolute left-[1822px] top-[10px] flex h-[34px] w-[71px] items-center justify-center border-2 border-[#0000ff] bg-white text-[25px] text-[#0000ff]">1,00k</div>
        </div>

        <div className="mt-[3px] flex h-[25px] shrink-0 items-center pl-[96px]">
          <div className="flex w-[21px] items-center">
            <svg width="12" height="18" viewBox="0 0 12 18"><path d="M12 0v18L0 9Z" fill="#808080" /></svg>
          </div>
          <div className="h-[25px] w-[2819px] bg-white" />
          <div className="ml-[9px]">
            <svg width="12" height="18" viewBox="0 0 12 18"><path d="M0 0v18l12-9Z" fill="#808080" /></svg>
          </div>
        </div>

        <div className="ml-[324px] mt-[10px] grid h-[97px] w-[2431px] shrink-0 grid-cols-[803px_803px_803px] border-2 border-[#d4d4d4] bg-white pl-[17px] pt-[3px]">
          <LegendCell on label="1 1. Messung li. Aug 4" value="77,3 dB" textClass="text-[#00cc96]" line={<div className="h-[5px] bg-[#00cc96]" />} />
          <LegendCell on label="Phase" value="28 deg" textClass="text-[#d000f0]" line={<div className="h-[5px] border-t-[5px] border-dotted border-[#d000f0]" />} />
          <LegendCell label="Min phase" value="deg" textClass="text-[#b4b4b4]" />
          <LegendCell label="Excess phase" value="deg" textClass="text-[#b4b4b4]" />
          <LegendCell label="Mic/Meter Cal" value="dB" textClass="text-[#b4b4b4]" />
          <LegendCell label="Soundcard Cal" value="dB" textClass="text-[#b4b4b4]" />
        </div>
      </div>
    </div>

    <div className="flex h-[58px] shrink-0 items-center border-t-2 border-b-[3px] border-t-[#dcdcdc] border-b-[#111] bg-[#f5f5f5] whitespace-nowrap">
      <div className="flex h-full w-[186px] items-center border-r-2 border-[#dcdcdc] pl-[6px] pt-[3px]">94/187MB</div>
      <div className="flex h-full w-[121px] items-center border-r-2 border-[#dcdcdc] pl-[9px] pt-[3px]">44.1 kHz</div>
      <div className="flex h-full w-[256px] items-center border-r-2 border-[#dcdcdc] pl-[11px] pt-[3px]">Int32L in, Int32L out</div>
      <div className="flex h-full w-[605px] items-center gap-[15px] border-r-2 border-[#dcdcdc] pl-[10px] pt-[3px] text-[25.5px] text-[#8ebb2c]">
        <span>XXXX XXXX</span>
        <span>XXXX XXXX</span>
        <span>XXXX XXXX</span>
        <span className="text-[28px] text-[#7ba0e8]">0000 0000</span>
      </div>
      <div className="flex h-full w-[221px] items-center border-r-2 border-[#dcdcdc] pl-[10px] pt-[3px]">24-bit input data</div>
      <div className="flex h-full w-[644px] items-center border-r-2 border-[#dcdcdc] pl-[9px] pt-[3px]">Peak input before clipping 120 dB SPL (uncalibrated)</div>
      <div className="flex h-full w-[1347px] items-center border-r-2 border-[#dcdcdc] pl-[165px] pt-[3px] tracking-[0.25px]">Right click &amp; drag to pan; Ctrl+Right click &amp; drag to measure; mouse wheel to zoom;</div>
    </div>
  </div>
);

export default App;
